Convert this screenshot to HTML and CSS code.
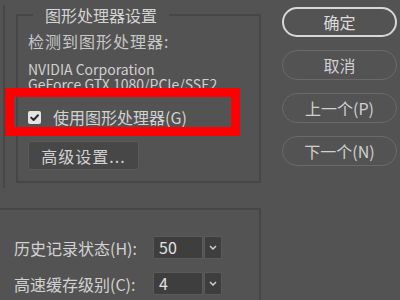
FILE: index.html
```html
<!DOCTYPE html>
<html lang="zh-CN">
<head>
<meta charset="utf-8">
<title>首选项 - 性能</title>
<link rel="stylesheet" href="styles.css">
</head>
<body>
<div class="dialog">
  <div class="left">
    <div class="upper">
      <fieldset class="gpu">
        <legend>图形处理器设置</legend>
        <div class="detect">检测到图形处理器:</div>
        <div class="gpu-name">NVIDIA Corporation<br>GeForce GTX 1080/PCIe/SSE2</div>
        <label class="check-row">
          <span class="checkbox"><svg width="13" height="13" viewBox="0 0 13 13"><path d="M3.2 6.6 L5.6 9 L10 4.2" fill="none" stroke="#2a2a2a" stroke-width="2" stroke-linecap="round" stroke-linejoin="round"/></svg></span>
          <span>使用图形处理器(G)</span>
        </label>
        <button class="adv">高级设置...</button>
      </fieldset>
    </div>
    <div class="lower">
      <div class="row">
        <span class="lbl">历史记录状态(H):</span>
        <div class="select"><span class="val">50</span><span class="arrow"><svg width="8" height="5" viewBox="0 0 8 5"><polyline points="1,1 4,4 7,1" fill="none" stroke="#cfcfcf" stroke-width="1.5"/></svg></span></div>
      </div>
      <div class="row">
        <span class="lbl">高速缓存级别(C):</span>
        <div class="select"><span class="val">4</span><span class="arrow"><svg width="8" height="5" viewBox="0 0 8 5"><polyline points="1,1 4,4 7,1" fill="none" stroke="#cfcfcf" stroke-width="1.5"/></svg></span></div>
      </div>
    </div>
  </div>
  <div class="right">
    <button class="pill primary">确定</button>
    <button class="pill">取消</button>
    <button class="pill">上一个(P)</button>
    <button class="pill">下一个(N)</button>
  </div>
  <div class="highlight"></div>
</div>
</body>
</html>
```
FILE: styles.css
```css
html, body {
  margin: 0;
  padding: 0;
}
body {
  width: 400px;
  height: 300px;
  overflow: hidden;
  background: #535353;
  color: #d2d2d2;
  font-family: "Noto Sans CJK SC", "Noto Sans", sans-serif;
  font-size: 16px;
}
.dialog {
  position: relative;
  display: flex;
  height: 300px;
}
.left {
  width: 262px;
  flex: none;
}
.upper {
  margin-left: 3px;
  border-left: 2px solid #474747;
  padding-left: 11px;
  height: 183px;
  box-sizing: border-box;
}
.gpu {
  margin: 5px 0 0 0;
  border: 2px solid #474747;
  padding: 0 10px;
  width: 245px;
  height: 178px;
  box-sizing: border-box;
  min-width: 0;
}
.gpu legend {
  padding: 0 12px;
  margin-left: 5px;
  font-size: 16px;
  line-height: 20px;
  color: #d4d4d4;
}
.detect {
  margin-top: 6px;
  font-size: 16px;
  line-height: 20px;
  letter-spacing: 1px;
  color: #c8c8c8;
}
.gpu-name {
  margin-top: 11px;
  font-size: 14px;
  line-height: 15px;
  color: #d0d0d0;
  white-space: nowrap;
}
.check-row {
  display: flex;
  align-items: center;
  gap: 12px;
  margin-top: 15px;
  height: 20px;
  line-height: 20px;
}
.checkbox {
  width: 13px;
  height: 13px;
  border-radius: 2px;
  background: #e4e4e4;
  display: flex;
}
.adv {
  display: block;
  margin-top: 14px;
  width: 111px;
  height: 29px;
  box-sizing: border-box;
  background: #474747;
  border: 1px solid #5a5a5a;
  border-radius: 3px;
  color: #d2d2d2;
  font-family: inherit;
  font-size: 16px;
  letter-spacing: 1px;
  padding: 0;
}
.lower {
  margin-top: 20px;
  width: 261px;
  height: 100px;
  box-sizing: border-box;
  border-top: 2px solid #474747;
  border-right: 2px solid #474747;
  padding-top: 26px;
  display: flex;
  flex-direction: column;
  gap: 13px;
}
.row {
  display: grid;
  grid-template-columns: 139px auto;
  align-items: center;
  padding-left: 14px;
  height: 23px;
}
.lbl {
  line-height: 20px;
  white-space: nowrap;
}
.select {
  display: flex;
  gap: 1px;
  height: 23px;
}
.val {
  width: 50px;
  height: 23px;
  box-sizing: border-box;
  background: #3e3e3e;
  border: 1px solid #5a5a5a;
  border-radius: 2px 0 0 2px;
  padding-left: 5px;
  line-height: 21px;
  color: #e2e2e2;
}
.arrow {
  width: 18px;
  height: 23px;
  box-sizing: border-box;
  background: #3e3e3e;
  border: 1px solid #5a5a5a;
  border-radius: 0 2px 2px 0;
  display: flex;
  align-items: center;
  justify-content: center;
}
.right {
  margin-left: 20px;
  padding-top: 7px;
  display: flex;
  flex-direction: column;
  gap: 13px;
}
.pill {
  width: 115px;
  height: 30px;
  box-sizing: border-box;
  border-radius: 15px;
  background: transparent;
  border: 1.5px solid #6a6a6a;
  color: #d0d0d0;
  font-family: inherit;
  font-size: 16px;
  padding: 0;
}
.pill.primary {
  border: 2px solid #d8d8d8;
  color: #dcdcdc;
}
.highlight {
  position: absolute;
  left: 5px;
  top: 88px;
  width: 235px;
  height: 48px;
  box-sizing: border-box;
  border: 9px solid #ff0000;
}
```
